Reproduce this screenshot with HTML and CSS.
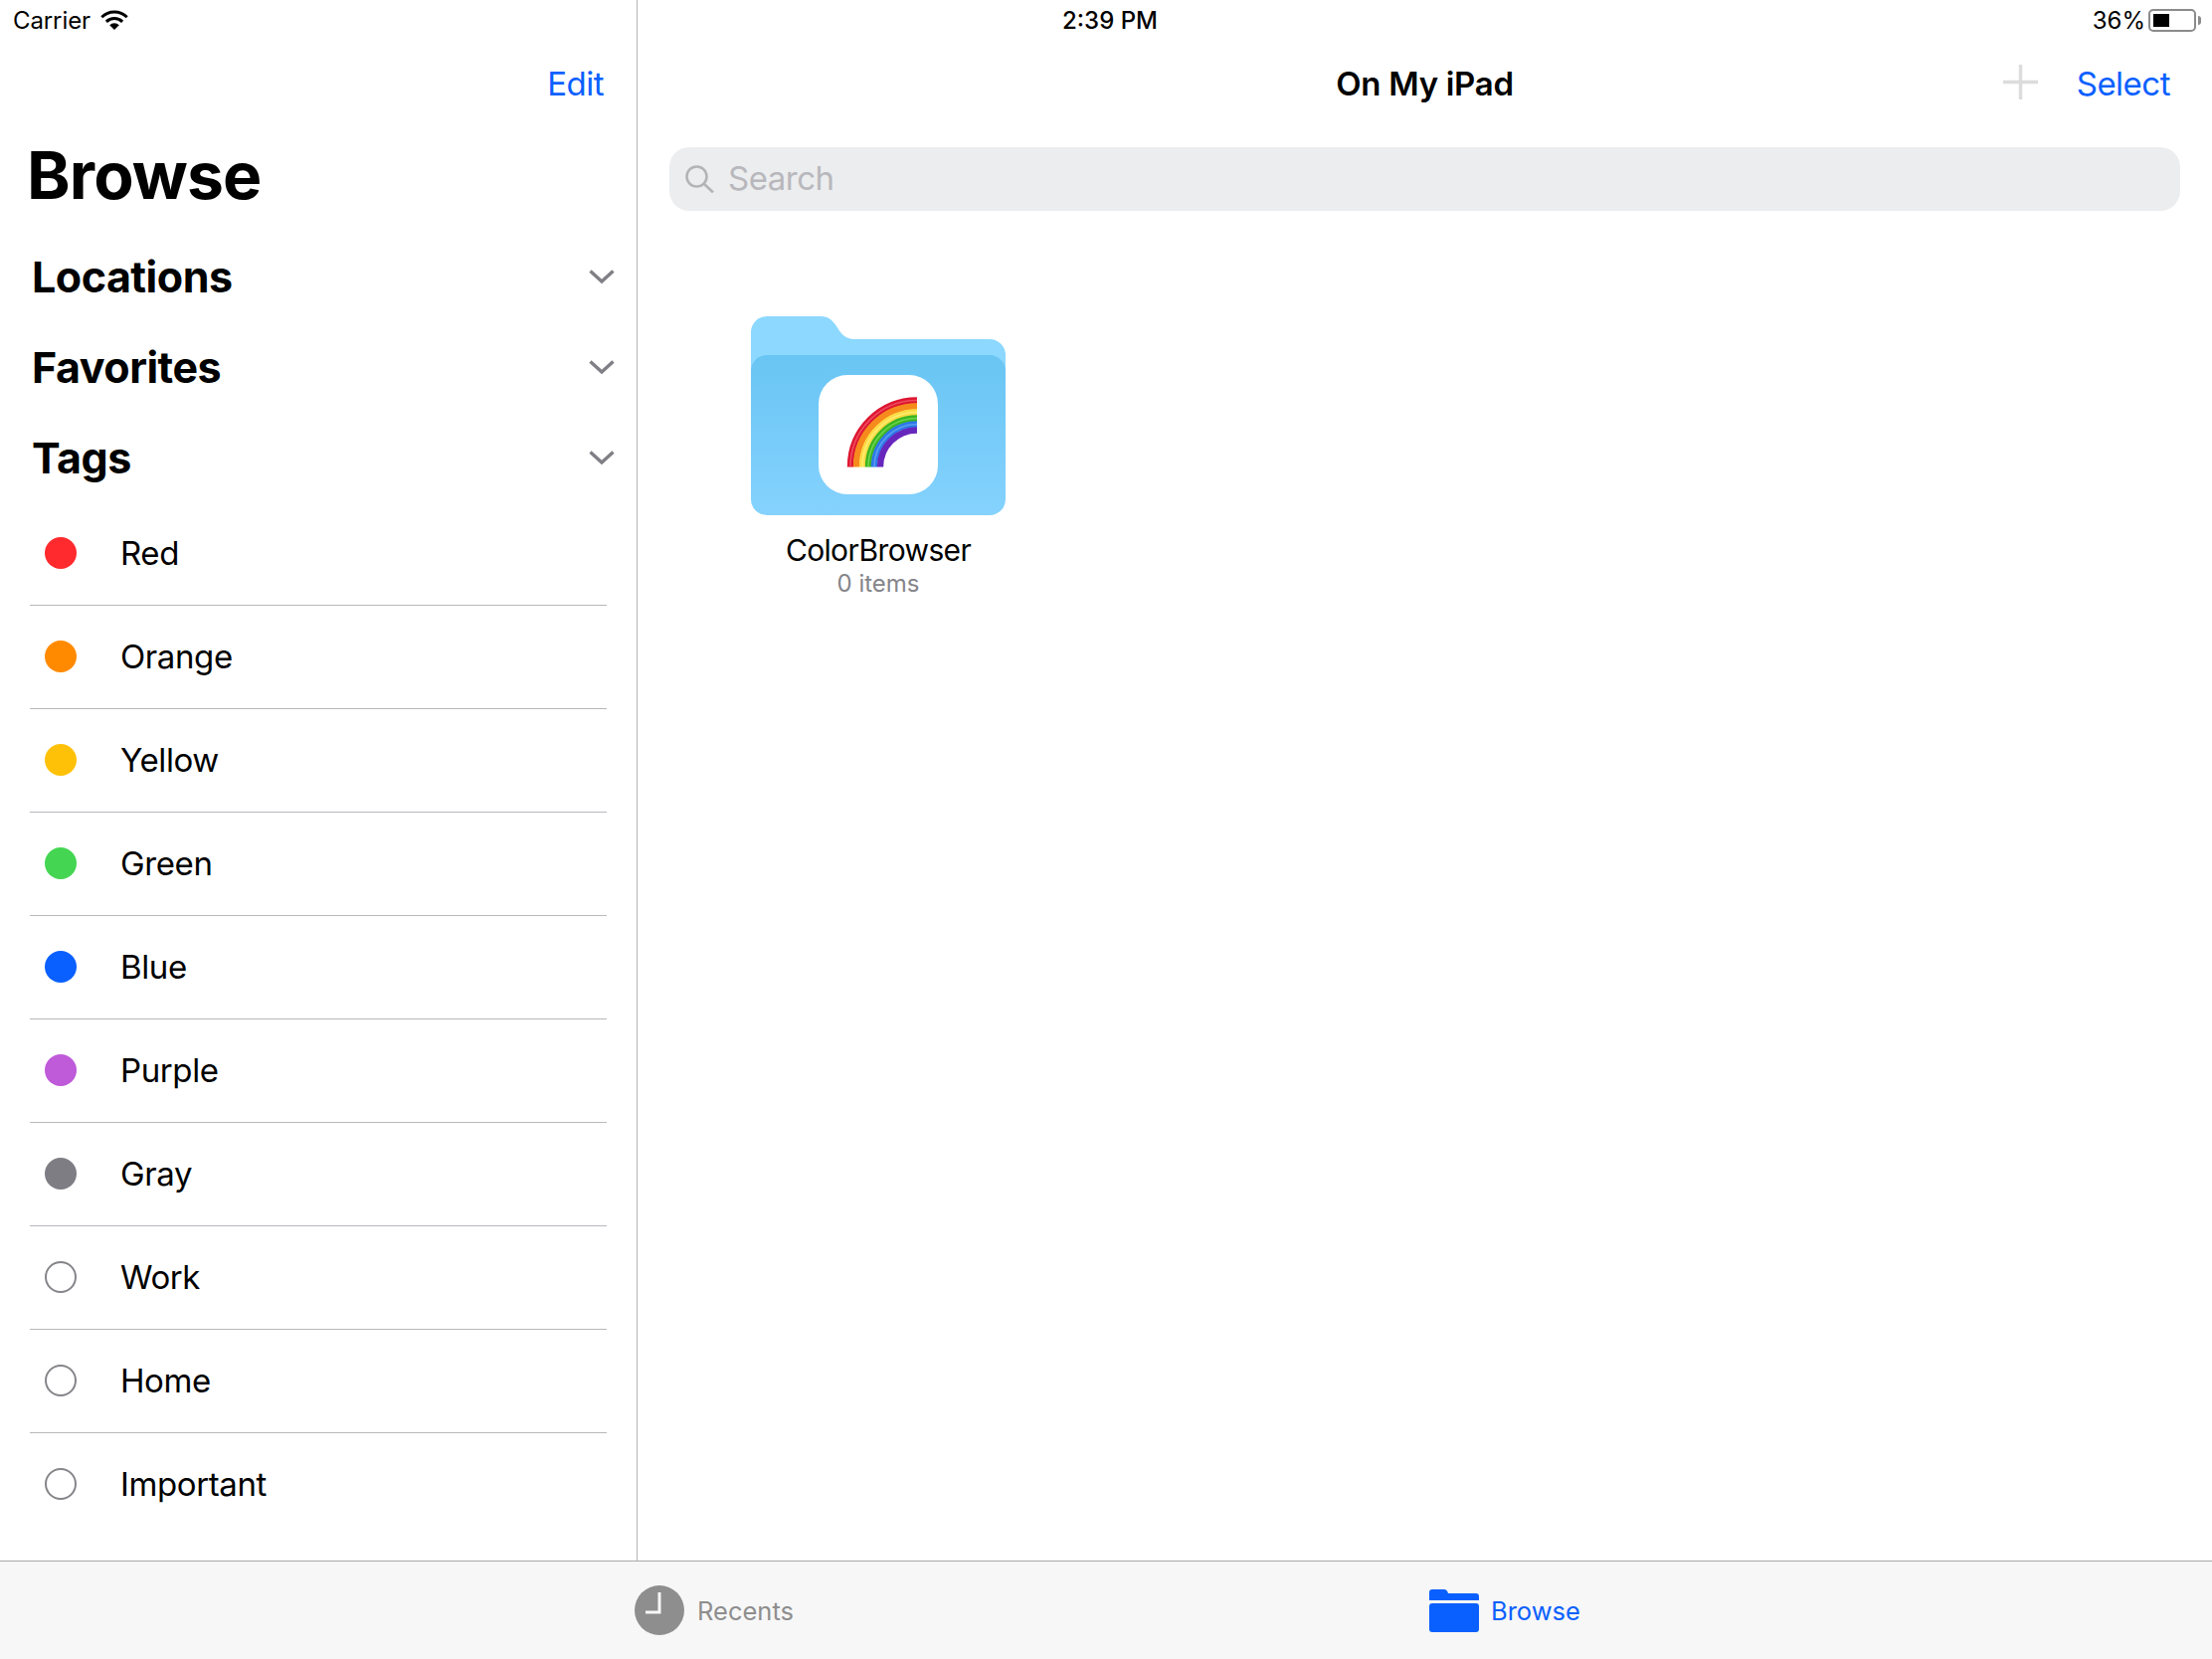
FILE: index.html
```html
<!DOCTYPE html>
<html lang="en">
<head>
  <meta charset="UTF-8">
  <title>On My iPad</title>
  <link rel="stylesheet" href="styles.css">
</head>
<body>
  <div class="status-bar">
    <div class="status-left">
      <span>Carrier</span>
      <svg class="wifi" width="28" height="20" viewBox="0 0 28 20">
        <path d="M1.3 7.3A18 18 0 0 1 26.7 7.3" fill="none" stroke="#000" stroke-width="3"/>
        <path d="M5.9 11.9A11.5 11.5 0 0 1 22.1 11.9" fill="none" stroke="#000" stroke-width="3"/>
        <path d="M14 20L9.2 15.2A6.8 6.8 0 0 1 18.8 15.2Z"/>
      </svg>
    </div>
    <div class="status-time">2:39 PM</div>
    <div class="status-right">
      <span>36%</span>
      <div class="battery"><div class="battery-level"></div></div>
      <div class="battery-nub"></div>
    </div>
  </div>

  <div class="panes">
    <aside class="sidebar">
      <div class="sidebar-nav"><a class="link">Edit</a></div>
      <h1 class="large-title">Browse</h1>

      <div class="section">
        <h2>Locations</h2>
        <svg class="chevron" width="26" height="14" viewBox="0 0 26 14"><path d="M1.5 1.5L13 12L24.5 1.5"/></svg>
      </div>
      <div class="section">
        <h2>Favorites</h2>
        <svg class="chevron" width="26" height="14" viewBox="0 0 26 14"><path d="M1.5 1.5L13 12L24.5 1.5"/></svg>
      </div>
      <div class="section">
        <h2>Tags</h2>
        <svg class="chevron" width="26" height="14" viewBox="0 0 26 14"><path d="M1.5 1.5L13 12L24.5 1.5"/></svg>
      </div>

      <ul class="tags">
        <li class="tag"><span class="dot red"></span>Red</li>
        <li class="tag"><span class="dot orange"></span>Orange</li>
        <li class="tag"><span class="dot yellow"></span>Yellow</li>
        <li class="tag"><span class="dot green"></span>Green</li>
        <li class="tag"><span class="dot blue"></span>Blue</li>
        <li class="tag"><span class="dot purple"></span>Purple</li>
        <li class="tag"><span class="dot gray"></span>Gray</li>
        <li class="tag"><span class="dot empty"></span>Work</li>
        <li class="tag"><span class="dot empty"></span>Home</li>
        <li class="tag"><span class="dot empty"></span>Important</li>
      </ul>
    </aside>

    <main class="content">
      <div class="content-nav">
        <div class="nav-title">On My iPad</div>
        <div class="nav-actions">
          <svg class="plus" width="35" height="35" viewBox="0 0 35 35"><path d="M17.5 0V35M0 17.5H35"/></svg>
          <a class="link">Select</a>
        </div>
      </div>

      <div class="search">
        <svg class="search-icon" width="29" height="28" viewBox="0 0 29 28">
          <circle cx="11.5" cy="11.5" r="10"/>
          <path d="M18.5 18.5L28 27.5"/>
        </svg>
        <span class="search-text">Search</span>
      </div>

      <div class="files">
        <div class="file">
          <svg class="folder" width="256" height="200" viewBox="0 0 256 200">
            <defs>
              <linearGradient id="front" x1="0" y1="0" x2="0" y2="1">
                <stop offset="0" stop-color="#69c5f3"/>
                <stop offset="1" stop-color="#85d2fe"/>
              </linearGradient>
            </defs>
            <path d="M0 16A16 16 0 0 1 16 0H70C78 0 82 4 86 10C91 18 95 23 104 23H240A16 16 0 0 1 256 39V120H0Z" fill="#8cd8ff"/>
            <rect y="39" width="256" height="161" rx="16" fill="url(#front)"/>
            <rect x="68" y="59" width="120" height="120" rx="29" fill="#fff"/>
            <g fill="none" stroke-width="6.4">
              <path d="M100 151.500A67 67 0 0 1 167 84.500" stroke="#dd1631"/>
              <path d="M106 151.500A61 61 0 0 1 167 90.500" stroke="#f68a1c"/>
              <path d="M112 151.500A55 55 0 0 1 167 96.500" stroke="#fcdc45"/>
              <path d="M118 151.500A49 49 0 0 1 167 102.500" stroke="#3db420"/>
              <path d="M124 151.500A43 43 0 0 1 167 108.500" stroke="#2c78e6"/>
              <path d="M130 151.500A37 37 0 0 1 167 114.500" stroke="#6727bd"/>
            </g>
            <g fill="none" stroke-width="1.6" opacity="0.8">
              <path d="M100 151.500A67 67 0 0 1 167 84.500" stroke="#f4586a"/>
              <path d="M112 151.500A55 55 0 0 1 167 96.500" stroke="#fff07c"/>
              <path d="M118 151.500A49 49 0 0 1 167 102.500" stroke="#7ade5a"/>
              <path d="M124 151.500A43 43 0 0 1 167 108.500" stroke="#66a6f5"/>
            </g>
          </svg>
          <div class="file-name">ColorBrowser</div>
          <div class="file-meta">0 items</div>
        </div>
      </div>
    </main>
  </div>

  <nav class="tab-bar">
    <div class="tab tab-recents">
      <svg width="50" height="50" viewBox="0 0 50 50">
        <circle cx="25" cy="25" r="25" fill="#8e8e8e"/>
        <path d="M25 7V27H11" fill="none" stroke="#f7f7f7" stroke-width="3"/>
      </svg>
      <span>Recents</span>
    </div>
    <div class="tab tab-browse">
      <svg width="50" height="43" viewBox="0 0 50 43">
        <path d="M0 11V3A3 3 0 0 1 3 0H15C17 0 18 1 19 4H47A3 3 0 0 1 50 7V11Z" fill="#0a60ff"/>
        <path d="M0 17A3 3 0 0 1 3 14H47A3 3 0 0 1 50 17V40A3 3 0 0 1 47 43H3A3 3 0 0 1 0 40Z" fill="#0a60ff"/>
      </svg>
      <span>Browse</span>
    </div>
  </nav>
</body>
</html>
```

FILE: styles.css
```css
* {
  box-sizing: border-box;
}

body {
  margin: 0;
  width: 2224px;
  height: 1668px;
  overflow: hidden;
  display: flex;
  flex-direction: column;
  position: relative;
  background: #fff;
  color: #000;
  font-family: Inter, "Noto Sans", sans-serif;
}

.link {
  color: #0a60ff;
  font-size: 33px;
  letter-spacing: -0.5px;
  line-height: 40px;
}

/* status bar sits over both panes */
.status-bar {
  position: absolute;
  top: 0;
  left: 0;
  right: 0;
  height: 40px;
  padding: 0 11px 0 13px;
  display: grid;
  grid-template-columns: 1fr auto 1fr;
  align-items: center;
  font-size: 24px;
}

.status-left {
  display: flex;
  align-items: center;
  gap: 10px;
  letter-spacing: -0.1px;
}

.status-time {
  font-weight: 500;
  margin-left: 6px;
}

.status-right {
  display: flex;
  align-items: center;
  justify-content: flex-end;
}

.battery {
  width: 48px;
  height: 23px;
  margin-left: 3px;
  padding: 3px;
  border: 2px solid #8b8b8b;
  border-radius: 5px;
}

.battery-level {
  width: 16px;
  height: 100%;
  background: #000;
}

.battery-nub {
  width: 3px;
  height: 9px;
  margin-left: 2px;
  background: #8b8b8b;
  border-radius: 0 3px 3px 0;
}

.panes {
  flex: 1;
  display: flex;
  min-height: 0;
}

.sidebar {
  width: 641px;
  flex-shrink: 0;
  border-right: 1px solid #b4b4b8;
  padding: 64px 0 0 30px;
}

.sidebar-nav {
  display: flex;
  justify-content: flex-end;
  padding-right: 33px;
}

.large-title {
  margin: 32px 0 16px -3px;
  font-size: 66px;
  font-weight: 700;
  line-height: 80px;
  letter-spacing: -0.9px;
}

.section {
  height: 91px;
  display: flex;
  align-items: center;
  justify-content: space-between;
  padding: 0 22px 0 2px;
}

.section h2 {
  margin: 0;
  font-size: 43px;
  font-weight: 700;
  letter-spacing: -0.5px;
}

.chevron path {
  fill: none;
  stroke: #7f7f85;
  stroke-width: 3.4;
}

.tags {
  list-style: none;
  margin: 0;
  padding: 0;
  width: 580px;
}

.tag {
  height: 104px;
  padding-bottom: 2px;
  display: flex;
  align-items: center;
  font-size: 33px;
  letter-spacing: -0.4px;
  border-bottom: 1px solid #b8b8bd;
}

.tag:last-child {
  border-bottom: 0;
}

.dot {
  width: 32px;
  height: 32px;
  margin: 0 44px 0 15px;
  border-radius: 50%;
}

.red { background: #ff2a2e; }
.orange { background: #ff8a00; }
.yellow { background: #ffc107; }
.green { background: #44d552; }
.blue { background: #0a60ff; }
.purple { background: #bf5ad9; }
.gray { background: #7e7d84; }
.empty { border: 2px solid #85858a; }

.content {
  flex: 1;
  min-width: 0;
  padding: 64px 32px 0;
}

.content-nav {
  height: 40px;
  position: relative;
  display: flex;
  align-items: center;
  justify-content: center;
}

.nav-title {
  font-size: 33px;
  font-weight: 600;
  letter-spacing: -0.3px;
}

.nav-actions {
  position: absolute;
  right: 10px;
  top: 0;
  height: 40px;
  display: flex;
  align-items: center;
  gap: 39px;
}

.plus {
  margin-bottom: 3px;
}

.plus path {
  fill: none;
  stroke: #dcdcdc;
  stroke-width: 3.5;
}

.search {
  height: 64px;
  margin-top: 44px;
  padding-left: 16px;
  display: flex;
  align-items: center;
  gap: 14px;
  background: #ecedef;
  border-radius: 20px;
  color: #b8b8bc;
  font-size: 33px;
  letter-spacing: -0.5px;
}

.search-text {
  margin-bottom: 2px;
}

.search-icon * {
  fill: none;
  stroke: #b4b4b8;
  stroke-width: 2.6;
}

.files {
  display: flex;
  padding: 106px 0 0 82px;
}

.file {
  width: 256px;
  display: flex;
  flex-direction: column;
  align-items: center;
}

.folder {
  display: block;
}

.file-name {
  margin-top: 17px;
  font-size: 30px;
  line-height: 36px;
  letter-spacing: -0.65px;
  white-space: nowrap;
}

.file-meta {
  margin-top: 1px;
  font-size: 24px;
  line-height: 30px;
  color: #85858a;
}

.tab-bar {
  height: 99px;
  flex-shrink: 0;
  position: relative;
  background: #f7f7f7;
  border-top: 1px solid #a9a9a9;
  display: flex;
  align-items: center;
}

.tab {
  display: flex;
  align-items: center;
  font-size: 25.500px;
}

.tab-recents {
  margin-left: 638px;
  gap: 13px;
  color: #8e8e8e;
}

.tab-browse {
  margin-left: 639px;
  gap: 12px;
  color: #0a60ff;
}
```
